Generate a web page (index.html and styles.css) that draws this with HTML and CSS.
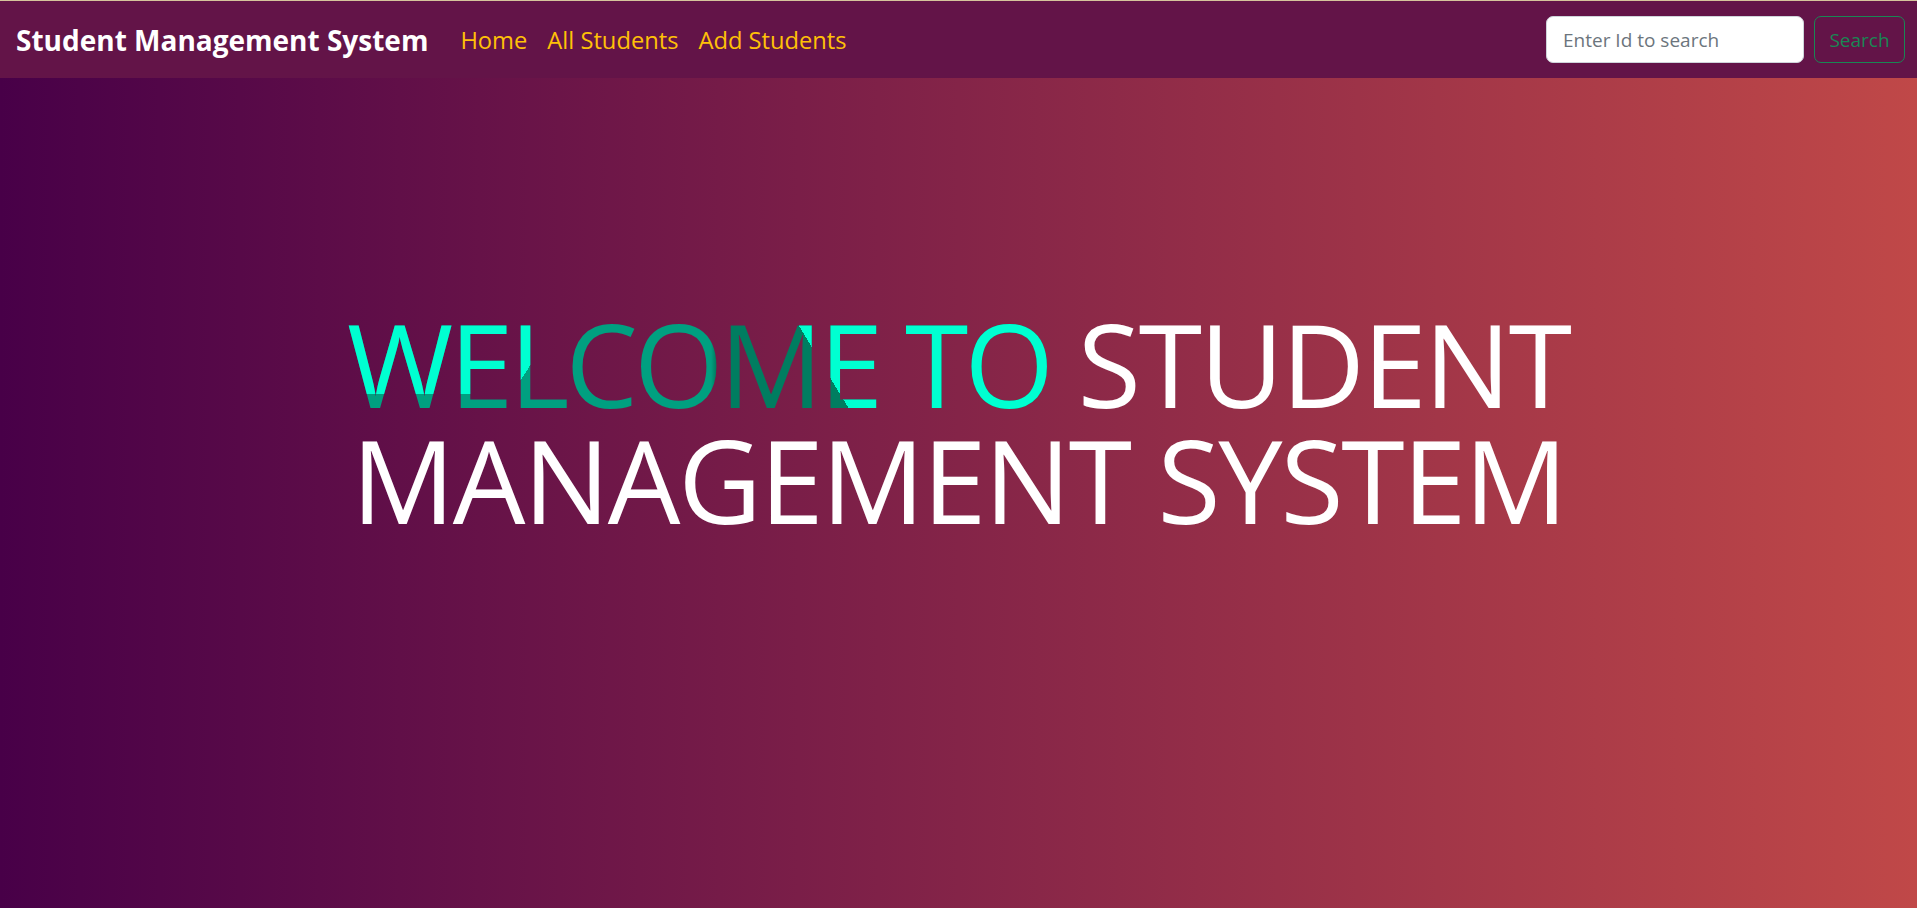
FILE: index.html
```html
<!DOCTYPE html>
<html lang="en">
<head>
<meta charset="utf-8">
<title>Student Management System</title>
<link rel="stylesheet" href="styles.css">
</head>
<body>
<nav class="navbar">
  <div class="nav-left">
    <a class="brand" href="#">Student Management System</a>
    <ul class="nav-links">
      <li><a href="#">Home</a></li>
      <li><a href="#">All Students</a></li>
      <li><a href="#">Add Students</a></li>
    </ul>
  </div>
  <form class="search">
    <input class="search-input" type="text" placeholder="Enter Id to search">
    <button class="search-btn" type="button">Search</button>
  </form>
</nav>
<main class="hero">
  <h1 class="title"><span class="shine">WELCOME TO</span> STUDENT MANAGEMENT SYSTEM</h1>
</main>
</body>
</html>
```

FILE: styles.css
```css
* { box-sizing: border-box; }

html, body {
  margin: 0;
  padding: 0;
  height: 100%;
}

body {
  font-family: "Open Sans", "Noto Sans", sans-serif;
  background: linear-gradient(to right, #480048, #c04848);
  min-height: 908px;
  overflow: hidden;
}

.navbar {
  display: flex;
  align-items: center;
  justify-content: space-between;
  height: 78px;
  padding: 0 12px 0 16px;
  background: #631448;
  border-top: 1px solid #d6c49c;
}

.nav-left {
  display: flex;
  align-items: center;
}

.brand {
  color: #fff;
  font-weight: 700;
  font-size: 28px;
  text-decoration: none;
  margin-right: 32px;
}

.nav-links {
  display: flex;
  list-style: none;
  margin: 0;
  padding: 0;
  gap: 20px;
}

.nav-links a {
  color: #ffc107;
  font-size: 23.7px;
  text-decoration: none;
}

.search {
  display: flex;
  align-items: center;
  gap: 10px;
  margin: 0;
}

.search-input {
  width: 258px;
  height: 47px;
  padding: 0 16px;
  border: 1px solid #ced4da;
  border-radius: 7px;
  background: #fff;
  font-family: inherit;
  font-size: 19px;
  color: #212529;
}

.search-input::placeholder {
  color: #6c757d;
}

.search-btn {
  width: 91px;
  height: 47px;
  border: 1px solid #198754;
  border-radius: 7px;
  background: transparent;
  color: #198754;
  font-family: inherit;
  font-size: 19px;
  padding: 0;
}

.hero {
  padding-top: 228px;
}

.title {
  margin: 0 auto;
  max-width: 1300px;
  text-align: center;
  font-weight: 400;
  font-size: 115px;
  line-height: 116px;
  letter-spacing: -2.2px;
  color: #fff;
}

.shine {
  display: inline-block;
  letter-spacing: -3.9px;
  color: transparent;
  background:
    linear-gradient(123deg, #00ffd1 186px, transparent 186px) 0 0 / 100% 88px no-repeat,
    linear-gradient(59deg, transparent 437px, #00ffd1 437px),
    linear-gradient(90deg, #00a080 0, #00a080 364px, #007d60 369px, #007d60 100%);
  -webkit-background-clip: text;
  background-clip: text;
}
```
